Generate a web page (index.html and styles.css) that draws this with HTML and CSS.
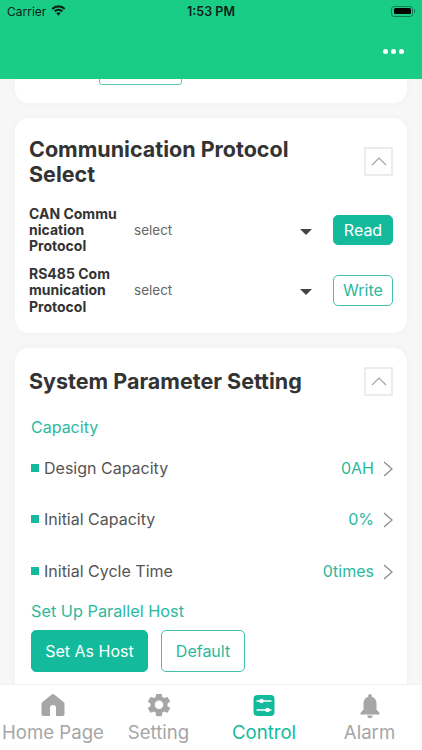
FILE: index.html
```html
<!DOCTYPE html>
<html lang="en">
<head>
<meta charset="utf-8">
<title>Control</title>
<link rel="stylesheet" href="styles.css">
</head>
<body>
<div class="app">
  <header class="header">
    <div class="status">
      <div class="status-left">
        <span>Carrier</span>
        <svg class="wifi" viewBox="0 0 16 12" width="15" height="11"><path d="M1.200 4.300a9.800 9.800 0 0 1 13.600 0" fill="none" stroke="#0d1f17" stroke-width="2.400"/><path d="M3.900 7a6 6 0 0 1 8.200 0" fill="none" stroke="#0d1f17" stroke-width="2.400"/><path d="M8 7.800c-1 0-1.800.4-2.400 1L8 11.800l2.400-3c-.6-.6-1.400-1-2.400-1z" fill="#0d1f17"/></svg>
      </div>
      <span class="status-time">1:53 PM</span>
      <div class="status-right">
        <span class="battery"><span class="battery-fill"></span></span>
        <span class="battery-tip"></span>
      </div>
    </div>
    <div class="navbar">
      <span class="dot"></span><span class="dot"></span><span class="dot"></span>
    </div>
  </header>

  <main class="content">
    <section class="card card-clipped">
      <span class="stub"></span>
    </section>

    <section class="card card-protocol">
      <div class="card-head">
        <h2 class="card-title">Communication Protocol Select</h2>
        <span class="collapse">
          <svg viewBox="0 0 16 9" width="16" height="9"><path d="M1 8l7-7 7 7" fill="none" stroke="#a3a3a3" stroke-width="1.200"/></svg>
        </span>
      </div>
      <div class="proto-row">
        <div class="proto-label">CAN Commu<br>nication<br>Protocol</div>
        <div class="proto-select">select</div>
        <span class="caret"></span>
        <button class="btn btn-fill btn-small">Read</button>
      </div>
      <div class="proto-row">
        <div class="proto-label">RS485 Com<br>munication<br>Protocol</div>
        <div class="proto-select">select</div>
        <span class="caret"></span>
        <button class="btn btn-line btn-small">Write</button>
      </div>
    </section>

    <section class="card card-system">
      <div class="card-head">
        <h2 class="card-title">System Parameter Setting</h2>
        <span class="collapse">
          <svg viewBox="0 0 16 9" width="16" height="9"><path d="M1 8l7-7 7 7" fill="none" stroke="#a3a3a3" stroke-width="1.200"/></svg>
        </span>
      </div>
      <div class="section-label section-capacity">Capacity</div>
      <div class="param"><span class="bullet"></span><span class="param-name">Design Capacity</span><span class="param-value">0AH</span><svg class="chev" viewBox="0 0 10 16" width="10" height="16"><path d="M1 1l8 7-8 7" fill="none" stroke="#8e8e8e" stroke-width="1.300"/></svg></div>
      <div class="param"><span class="bullet"></span><span class="param-name">Initial Capacity</span><span class="param-value">0%</span><svg class="chev" viewBox="0 0 10 16" width="10" height="16"><path d="M1 1l8 7-8 7" fill="none" stroke="#8e8e8e" stroke-width="1.300"/></svg></div>
      <div class="param"><span class="bullet"></span><span class="param-name">Initial Cycle Time</span><span class="param-value">0times</span><svg class="chev" viewBox="0 0 10 16" width="10" height="16"><path d="M1 1l8 7-8 7" fill="none" stroke="#8e8e8e" stroke-width="1.300"/></svg></div>
      <div class="section-label section-host">Set Up Parallel Host</div>
      <div class="host-actions">
        <button class="btn btn-fill btn-large btn-host">Set As Host</button>
        <button class="btn btn-line btn-large btn-default">Default</button>
      </div>
    </section>
  </main>

  <nav class="tabs">
    <div class="tab">
      <svg viewBox="-0.500 0 24 24" width="24" height="24"><path d="M10.300.5a2 2 0 0 1 2.400 0L22.300 8.300a2 2 0 0 1 .7 1.500V20a2 2 0 0 1-2 2h-6.500v-8a3 3 0 0 0-6 0v8H2a2 2 0 0 1-2-2V9.800a2 2 0 0 1 .7-1.500z" fill="#a6a6a6"/></svg>
      <span>Home Page</span>
    </div>
    <div class="tab">
      <svg viewBox="1.850 2.850 20.300 20.300" width="24" height="24"><path d="M19.140 12.940c.04-.3.06-.61.06-.94 0-.32-.02-.64-.07-.94l2.030-1.580c.18-.14.23-.41.12-.61l-1.920-3.320c-.12-.22-.37-.29-.59-.22l-2.390.96c-.5-.38-1.030-.7-1.620-.94l-.36-2.540c-.04-.24-.24-.41-.48-.41h-3.840c-.24 0-.43.17-.47.41l-.36 2.540c-.59.24-1.130.57-1.620.94l-2.390-.96c-.22-.08-.47 0-.59.22L2.740 8.870c-.12.21-.08.47.12.61l2.030 1.580c-.05.3-.09.63-.09.94s.02.64.07.94l-2.030 1.580c-.18.14-.23.41-.12.61l1.920 3.320c.12.22.37.29.59.22l2.390-.96c.5.38 1.030.7 1.620.94l.36 2.540c.05.24.24.41.48.41h3.840c.24 0 .44-.17.47-.41l.36-2.540c.59-.24 1.130-.56 1.620-.94l2.390.96c.22.08.47 0 .59-.22l1.920-3.320c.12-.22.07-.47-.12-.61l-2.010-1.580zM12 15.600c-1.980 0-3.600-1.620-3.600-3.600s1.620-3.600 3.600-3.600 3.600 1.620 3.600 3.600-1.620 3.600-3.600 3.600z" fill="#a6a6a6"/></svg>
      <span>Setting</span>
    </div>
    <div class="tab tab-active">
      <svg viewBox="0 0 24 24" width="24" height="24"><rect x="1.500" y="1" width="21" height="21" rx="4" fill="#13ba9c"/><path d="M4.500 7h15M4.500 16h15" stroke="#fff" stroke-width="1.500"/><circle cx="9.500" cy="7" r="2.200" fill="#fff"/><circle cx="15.500" cy="16" r="2.200" fill="#fff"/></svg>
      <span>Control</span>
    </div>
    <div class="tab">
      <svg viewBox="0 0 24 24" width="24" height="24"><path d="M12 0a1.800 1.800 0 0 1 1.800 1.800v.9C17 3.500 18.500 6.500 18.500 9.500v6l3 3.500v1.500h-19V19l3-3.500v-6c0-3 1.500-6 4.700-6.800v-.9A1.800 1.800 0 0 1 12 0zM9.300 21.500h5.400a2.700 2.700 0 0 1-5.400 0z" fill="#a6a6a6"/></svg>
      <span>Alarm</span>
    </div>
  </nav>
</div>
</body>
</html>
```
FILE: styles.css
```css
* {
  box-sizing: border-box;
}

html, body {
  margin: 0;
  padding: 0;
}

body {
  font-family: Inter, "Noto Sans", sans-serif;
  background: #f7f7f7;
}

.app {
  width: 422px;
  height: 750px;
  display: flex;
  flex-direction: column;
  overflow: hidden;
}

.header {
  height: 79px;
  flex: none;
  background: #19cd87;
  position: relative;
  z-index: 1;
}

.status {
  height: 22px;
  padding: 0 7px 0 7px;
  display: grid;
  grid-template-columns: 1fr auto 1fr;
  align-items: center;
  color: #0d1f17;
  font-size: 12px;
}

.status-left {
  display: flex;
  align-items: center;
  gap: 5px;
}

.wifi {
  margin-top: -1px;
}

.status-time {
  font-size: 12.500px;
  font-weight: 600;
}

.status-right {
  display: flex;
  justify-content: flex-end;
  align-items: center;
  gap: 1px;
}

.battery {
  width: 22px;
  height: 11px;
  padding: 1.500px;
  border: 1px solid #0f7d55;
  border-radius: 3px;
  display: block;
}

.battery-fill {
  display: block;
  height: 100%;
  background: #000;
  border-radius: 1.500px;
}

.battery-tip {
  width: 1px;
  height: 4px;
  background: #0f7d55;
}

.navbar {
  height: 57px;
  padding: 2px 18px 0 0;
  display: flex;
  justify-content: flex-end;
  align-items: center;
  gap: 3px;
}

.dot {
  width: 5px;
  height: 5px;
  border-radius: 50%;
  background: #fff;
}

.content {
  flex: 1;
  min-height: 0;
  overflow: hidden;
  padding: 0 15px;
  display: flex;
  flex-direction: column;
  gap: 15px;
}

.card {
  flex: none;
  background: #fff;
  border-radius: 14px;
  box-shadow: 0 0 10px rgba(0, 0, 0, 0.03);
}

.card-clipped {
  height: 39px;
  margin-top: -15px;
  padding: 0 0 0 84px;
}

.stub {
  display: block;
  width: 83px;
  height: 21px;
  border: 1px solid #5cc9b5;
  border-radius: 3px;
}

.card-protocol {
  height: 215px;
  padding: 17px 14px 0;
}

.card-system {
  padding: 17px 14px 40px;
}

.card-head {
  display: flex;
  justify-content: space-between;
  align-items: flex-start;
}

.card-title {
  margin: 0;
  width: 280px;
  padding-top: 2px;
  font-size: 21.500px;
  line-height: 25px;
  font-weight: 700;
  color: #333;
}

.card-system .card-title {
  width: auto;
  padding-top: 4px;
}

.collapse {
  width: 29px;
  height: 29px;
  margin-top: 12px;
  border: 2px solid #ececec;
  display: flex;
  align-items: center;
  justify-content: center;
}

.card-system .collapse {
  margin-top: 2px;
}

.proto-row {
  display: flex;
  align-items: center;
  height: 60.300px;
}

.card-head + .proto-row {
  margin-top: 13px;
}

.proto-label {
  width: 105px;
  font-size: 14px;
  line-height: 16.300px;
  font-weight: 700;
  color: #333;
}

.proto-select {
  flex: 1;
  font-size: 13.500px;
  color: #666;
}

.caret {
  width: 0;
  height: 0;
  margin: 3px 21px 0 0;
  border-left: 6px solid transparent;
  border-right: 6px solid transparent;
  border-top: 6px solid #444;
}

.btn {
  font-family: inherit;
  padding: 0;
  border-radius: 5px;
}

.btn-small {
  width: 60px;
  height: 30.500px;
  font-size: 16px;
}

.btn-large {
  height: 42px;
  font-size: 16px;
}

.btn-fill {
  background: #13ba9c;
  color: #fff;
  border: 1px solid #13ba9c;
}

.btn-line {
  background: #fff;
  color: #2cb8a0;
  border: 1px solid #3fc1aa;
}

.section-label {
  padding-left: 2px;
  font-size: 16px;
  line-height: 20px;
  color: #2cb8a0;
}

.section-capacity {
  margin-top: 21px;
}

.param {
  height: 51.500px;
  padding-left: 2px;
  display: flex;
  align-items: center;
  font-size: 16px;
}

.section-capacity + .param {
  margin-top: 5px;
}

.bullet {
  width: 8px;
  height: 8px;
  margin-right: 5px;
  background: #13ba9c;
}

.param-name {
  flex: 1;
  color: #555;
}

.param-value {
  color: #2cb8a0;
}

.chev {
  margin-left: 9px;
  margin-top: 2px;
}

.section-host {
  margin-top: 4.500px;
  font-size: 16.300px;
}

.host-actions {
  display: flex;
  gap: 13px;
  padding: 9px 0 0 2px;
}

.btn-host {
  width: 117px;
}

.btn-default {
  width: 84px;
}

.tabs {
  height: 66px;
  flex: none;
  background: #fff;
  border-top: 1px solid #f2f2f2;
  display: grid;
  grid-template-columns: 106px 105px 106px 105px;
  position: relative;
}

.tab {
  display: flex;
  flex-direction: column;
  align-items: center;
  padding-top: 9px;
  font-size: 18.600px;
  line-height: 24px;
  color: #a6a6a6;
}

.tab span {
  margin-top: 2px;
  white-space: nowrap;
}

.tab-active {
  color: #13ba9c;
}
```
